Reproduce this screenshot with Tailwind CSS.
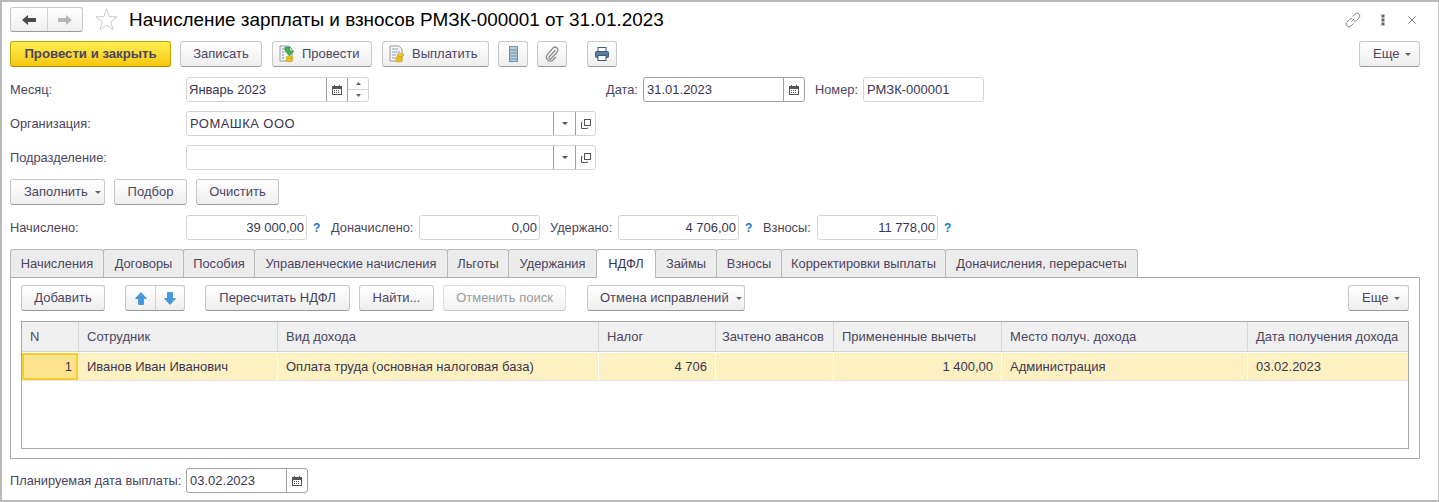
<!DOCTYPE html>
<html><head><meta charset="utf-8"><script src="https://cdn.jsdelivr.net/npm/@tailwindcss/browser@4"></script></head>
<body class="bg-white">
<div class="relative w-[1439px] h-[502px] overflow-hidden bg-white border-t-2 border-l-2 border-b-2 border-[#b9b9b9] font-['Liberation_Sans',Arial,sans-serif] text-[12.8px] text-[#4b4560]">
<div class="absolute right-0 top-0 bottom-0 w-[1px] bg-[#c8c8c8]"></div>
<div class="flex flex-col">
<!-- Title -->
<div class="flex items-center h-[25px] mt-[5px] ml-[8px]">
  <div class="flex w-[73px] h-[25px] rounded-[3px] border border-[#c8c8c8] border-b-[#9a9a9a] bg-gradient-to-b from-white to-[#eeeeee]">
    <div class="w-[37px] flex items-center justify-center border-r border-[#d0d0d0]"><svg width="14" height="10" viewBox="0 0 14 10"><path d="M0 5 L6 0 V3 H14 V7 H6 V10 Z" fill="#4a4a4a"/></svg></div>
    <div class="flex-1 flex items-center justify-center"><svg width="14" height="10" viewBox="0 0 14 10"><path d="M14 5 L8 0 V3 H0 V7 H8 V10 Z" fill="#b5b5b5"/></svg></div>
  </div>
  <svg class="ml-[12px]" width="23" height="23" viewBox="0 0 23 23"><path d="M11.5 1 L14.2 8.6 L22 8.9 L15.9 13.8 L18 21.6 L11.5 17.1 L5 21.6 L7.1 13.8 L1 8.9 L8.8 8.6 Z" fill="#fff" stroke="#c5ccd1"/></svg>
  <div class="ml-[11px] text-[18.9px] text-black leading-[24px] whitespace-nowrap">Начисление зарплаты и взносов РМЗК-000001 от 31.01.2023</div>
  <div class="ml-auto flex items-center mr-[23px]">
    <svg width="16" height="16" viewBox="0 0 16 16" fill="none" stroke="#8a8a8a" stroke-width="1"><path d="M6.5 9.5 L9.5 6.5"/><path d="M7.5 4.5 L10 2 a2.8 2.8 0 0 1 4 4 L11.5 8.5 a2.8 2.8 0 0 1-3 .5"/><path d="M8.5 11.5 L6 14 a2.8 2.8 0 0 1-4-4 L4.5 7.5 a2.8 2.8 0 0 1 3-.5"/></svg>
    <svg class="ml-[20px]" width="4" height="12" viewBox="0 0 4 12"><g fill="#666"><rect x="0.5" y="0.5" width="3" height="3"/><rect x="0.5" y="4.5" width="3" height="3"/><rect x="0.5" y="8.5" width="3" height="3"/></g></svg>
    <svg class="ml-[23px]" width="8" height="8" viewBox="0 0 8 8" stroke="#777" fill="none"><path d="M0.5 0.5 L7.5 7.5 M7.5 0.5 L0.5 7.5"/></svg>
  </div>
</div>
<!-- Toolbar -->
<div class="flex items-center h-[26px] mt-[9px] ml-[8px] text-[13px] whitespace-nowrap">
  <div class="h-[26px] w-[161px] flex items-center justify-center rounded-[3px] border border-[#c2a000] border-b-[#a68a00] bg-gradient-to-b from-[#fff04f] to-[#f7c600] font-bold text-[13.2px] text-[#4b4560]">Провести и закрыть</div>
  <div class="ml-[9px] h-[26px] w-[82px] flex items-center justify-center rounded-[3px] border border-[#c8c8c8] border-b-[#9a9a9a] bg-gradient-to-b from-white to-[#eeeeee]">Записать</div>
  <div class="ml-[10px] h-[26px] w-[100px] flex items-center gap-[6px] pl-[5px] rounded-[3px] border border-[#c8c8c8] border-b-[#9a9a9a] bg-gradient-to-b from-white to-[#eeeeee]">
    <svg width="18" height="18" viewBox="0 0 18 18"><path d="M2 1 H11 L14 4 V16 H2 Z" fill="#f4f4f4" stroke="#9a9a9a"/><path d="M4 4 H7 M4 7 H6 M4 10 H6 M4 13 H6" stroke="#6d8fb5"/><path d="M7 2 H12 V6 H16 L11.5 11 L7 6 Z" fill="#3fb24a" stroke="#2b8a35" stroke-width=".5"/><ellipse cx="11.5" cy="12.5" rx="3.5" ry="1.5" fill="#f3c623" stroke="#b38a0c" stroke-width=".5"/><ellipse cx="11.5" cy="15" rx="3.5" ry="1.5" fill="#f3c623" stroke="#b38a0c" stroke-width=".5"/></svg>
    <span>Провести</span></div>
  <div class="ml-[10px] h-[26px] w-[107px] flex items-center gap-[6px] pl-[5px] rounded-[3px] border border-[#c8c8c8] border-b-[#9a9a9a] bg-gradient-to-b from-white to-[#eeeeee]">
    <svg width="18" height="18" viewBox="0 0 18 18"><path d="M2 1 H11 L14 4 V16 H2 Z" fill="#f4f4f4" stroke="#9a9a9a"/><path d="M4 4 H10 M4 7 H12 M4 10 H8 M4 13 H7" stroke="#8fa6c2"/><ellipse cx="12.5" cy="10" rx="3.5" ry="1.5" fill="#f3c623" stroke="#b38a0c" stroke-width=".5"/><ellipse cx="11" cy="13" rx="3.5" ry="1.5" fill="#f3c623" stroke="#b38a0c" stroke-width=".5"/><ellipse cx="11" cy="15.5" rx="3.5" ry="1.5" fill="#f3c623" stroke="#b38a0c" stroke-width=".5"/></svg>
    <span>Выплатить</span></div>
  <div class="ml-[9px] h-[26px] w-[30px] flex items-center justify-center rounded-[3px] border border-[#c8c8c8] border-b-[#9a9a9a] bg-gradient-to-b from-white to-[#eeeeee]">
    <svg width="9" height="16" viewBox="0 0 9 16"><rect x=".5" y=".5" width="8" height="15" fill="#b4cde0" stroke="#6f8fab"/><path d="M1 4 H8 M1 7 H8 M1 10 H8 M1 13 H8" stroke="#6f8fab"/></svg></div>
  <div class="ml-[9px] h-[26px] w-[30px] flex items-center justify-center rounded-[3px] border border-[#c8c8c8] border-b-[#9a9a9a] bg-gradient-to-b from-white to-[#eeeeee]">
    <svg width="16" height="16" viewBox="0 0 16 16" fill="none" stroke="#8a8a8a" stroke-width="1.2"><path d="M11.5 4 L5 11 a1.5 1.5 0 0 0 2 2 L13 6 a2.8 2.8 0 0 0-4-4 L3 9 a4 4 0 0 0 5.500 5.500 L12 11"/></svg></div>
  <div class="ml-[20px] h-[26px] w-[30px] flex items-center justify-center rounded-[3px] border border-[#c8c8c8] border-b-[#9a9a9a] bg-gradient-to-b from-white to-[#eeeeee]">
    <svg width="16" height="16" viewBox="0 0 16 16"><rect x="4" y="1.5" width="8" height="4" fill="#fff" stroke="#3d5a78"/><rect x="1.5" y="5.5" width="13" height="6" rx="1" fill="#5b7c9e" stroke="#3d5a78"/><rect x="4" y="9.5" width="8" height="5" fill="#fff" stroke="#3d5a78"/></svg></div>
  <div class="ml-auto mr-[19px] h-[26px] w-[61px] flex items-center gap-[6px] pl-[13px] rounded-[3px] border border-[#c8c8c8] border-b-[#9a9a9a] bg-gradient-to-b from-white to-[#eeeeee]"><span>Еще</span><svg width="6" height="3" viewBox="0 0 6 3"><path d="M0 0 H6 L3 3 Z" fill="#666"/></svg></div>
</div>
<!-- Row month -->
<div class="flex items-center h-[25px] mt-[10px] ml-[8px] whitespace-nowrap">
  <div class="w-[176px]">Месяц:</div>
  <div class="flex w-[183px] h-[25px] rounded-[3px] border border-[#d4d4d4]">
    <div class="w-[139px] pl-[2px] leading-[23px] text-[13px] text-[#3a3550]">Январь 2023</div>
    <div class="w-[21px] flex items-center justify-center border-l border-[#a0a0a0]"><svg width="10" height="10" viewBox="0 0 10 10"><rect x=".5" y="1.5" width="9" height="8" fill="#fff" stroke="#555"/><path d="M1 2 H9 V4 H1 Z" fill="#555"/><path d="M2.5 0 V2 M7.500 0 V2" stroke="#555"/><path d="M2 5.5 H8 M2 7.5 H8" stroke="#555" stroke-dasharray="1 1"/></svg></div>
    <div class="flex-1 flex flex-col border-l border-[#a0a0a0]"><div class="flex-1 flex items-center justify-center border-b border-[#d4d4d4]"><svg width="5" height="3" viewBox="0 0 5 3"><path d="M0 3 H5 L2.5 0 Z" fill="#666"/></svg></div><div class="flex-1 flex items-center justify-center"><svg width="5" height="3" viewBox="0 0 5 3"><path d="M0 0 H5 L2.5 3 Z" fill="#666"/></svg></div></div>
  </div>
  <div class="ml-[237px] w-[37px]">Дата:</div>
  <div class="flex w-[162px] h-[25px] rounded-[3px] border border-[#a0a0a0]">
    <div class="flex-1 pl-[3px] leading-[23px] text-[13px] text-[#3a3550]">31.01.2023</div>
    <div class="w-[21px] flex items-center justify-center border-l border-[#a0a0a0]"><svg width="10" height="10" viewBox="0 0 10 10"><rect x=".5" y="1.5" width="9" height="8" fill="#fff" stroke="#555"/><path d="M1 2 H9 V4 H1 Z" fill="#555"/><path d="M2.5 0 V2 M7.5 0 V2" stroke="#555"/><path d="M2 5.5 H8 M2 7.5 H8" stroke="#555" stroke-dasharray="1 1"/></svg></div>
  </div>
  <div class="ml-[10px] w-[48px]">Номер:</div>
  <div class="w-[121px] h-[25px] rounded-[3px] border border-[#d4d4d4] pl-[3px] leading-[23px] text-[13px] text-[#3a3550]">РМЗК-000001</div>
</div>
<!-- Org -->
<div class="flex items-center h-[25px] mt-[9px] ml-[8px]">
  <div class="w-[176px]">Организация:</div>
  <div class="flex w-[410px] h-[25px] rounded-[3px] border border-[#d4d4d4]">
    <div class="flex-1 pl-[3px] leading-[23px] text-[13px] tracking-[0.45px] text-[#3a3550]">РОМАШКА ООО</div>
    <div class="w-[22px] flex items-center justify-center border-l border-[#a0a0a0]"><svg width="6" height="3" viewBox="0 0 6 3"><path d="M0 0 H6 L3 3 Z" fill="#555"/></svg></div>
    <div class="w-[20px] flex items-center justify-center border-l border-[#a0a0a0]"><svg width="10" height="10" viewBox="0 0 10 10" fill="none" stroke="#555"><rect x="3.5" y=".5" width="6" height="6"/><path d="M1.5 3.5 H.5 V9.5 H6.5 V8.5"/></svg></div>
  </div>
</div>
<div class="flex items-center h-[25px] mt-[9px] ml-[8px]">
  <div class="w-[176px]">Подразделение:</div>
  <div class="flex w-[410px] h-[25px] rounded-[3px] border border-[#d4d4d4]">
    <div class="flex-1"></div>
    <div class="w-[22px] flex items-center justify-center border-l border-[#a0a0a0]"><svg width="6" height="3" viewBox="0 0 6 3"><path d="M0 0 H6 L3 3 Z" fill="#555"/></svg></div>
    <div class="w-[20px] flex items-center justify-center border-l border-[#a0a0a0]"><svg width="10" height="10" viewBox="0 0 10 10" fill="none" stroke="#555"><rect x="3.5" y=".5" width="6" height="6"/><path d="M1.5 3.5 H.5 V9.5 H6.5 V8.5"/></svg></div>
  </div>
</div>
<!-- Fill buttons -->
<div class="flex items-center h-[26px] mt-[9px] ml-[8px] gap-[9px] text-[13px] whitespace-nowrap">
  <div class="h-[26px] w-[95px] flex items-center gap-[7px] pl-[13px] rounded-[3px] border border-[#c8c8c8] border-b-[#9a9a9a] bg-gradient-to-b from-white to-[#eeeeee]"><span>Заполнить</span><svg width="6" height="3" viewBox="0 0 6 3"><path d="M0 0 H6 L3 3 Z" fill="#666"/></svg></div>
  <div class="h-[26px] w-[73px] flex items-center justify-center rounded-[3px] border border-[#c8c8c8] border-b-[#9a9a9a] bg-gradient-to-b from-white to-[#eeeeee]">Подбор</div>
  <div class="h-[26px] w-[83px] flex items-center justify-center rounded-[3px] border border-[#c8c8c8] border-b-[#9a9a9a] bg-gradient-to-b from-white to-[#eeeeee]">Очистить</div>
</div>
<!-- Totals -->
<div class="flex items-center h-[25px] mt-[10px] ml-[8px] whitespace-nowrap">
  <div class="w-[176px]">Начислено:</div>
  <div class="w-[121px] h-[25px] rounded-[3px] border border-[#d4d4d4] pr-[2px] text-right leading-[23px] text-[13px] text-[#3a3550]">39 000,00</div>
  <div class="w-[24px] pl-[6px] text-[12px] font-bold text-[#0f7ac0]">?</div>
  <div class="w-[88px]">Доначислено:</div>
  <div class="w-[121px] h-[25px] rounded-[3px] border border-[#d4d4d4] pr-[2px] text-right leading-[23px] text-[13px] text-[#3a3550]">0,00</div>
  <div class="w-[10px]"></div>
  <div class="w-[68px]">Удержано:</div>
  <div class="w-[121px] h-[25px] rounded-[3px] border border-[#d4d4d4] pr-[2px] text-right leading-[23px] text-[13px] text-[#3a3550]">4 706,00</div>
  <div class="w-[24px] pl-[6px] text-[12px] font-bold text-[#0f7ac0]">?</div>
  <div class="w-[54px]">Взносы:</div>
  <div class="w-[121px] h-[25px] rounded-[3px] border border-[#d4d4d4] pr-[2px] text-right leading-[23px] text-[13px] text-[#3a3550]">11 778,00</div>
  <div class="w-[24px] pl-[6px] text-[12px] font-bold text-[#0f7ac0]">?</div>
</div>
<!-- Tabs -->
<div class="flex h-[29px] mt-[9px] ml-[8px] text-[12.85px] whitespace-nowrap relative z-10">
  <div class="w-[94px] h-[29px] bg-[#ececec] border border-[#b9b9b9] rounded-t-[3px] border-b-[#aaaaaa] flex items-center justify-center">Начисления</div>
  <div class="w-[81px] -ml-px h-[29px] bg-[#ececec] border border-[#b9b9b9] rounded-t-[3px] border-b-[#aaaaaa] flex items-center justify-center">Договоры</div>
  <div class="w-[72px] -ml-px h-[29px] bg-[#ececec] border border-[#b9b9b9] rounded-t-[3px] border-b-[#aaaaaa] flex items-center justify-center">Пособия</div>
  <div class="w-[194px] -ml-px h-[29px] bg-[#ececec] border border-[#b9b9b9] rounded-t-[3px] border-b-[#aaaaaa] flex items-center justify-center">Управленческие начисления</div>
  <div class="w-[62px] -ml-px h-[29px] bg-[#ececec] border border-[#b9b9b9] rounded-t-[3px] border-b-[#aaaaaa] flex items-center justify-center">Льготы</div>
  <div class="w-[89px] -ml-px h-[29px] bg-[#ececec] border border-[#b9b9b9] rounded-t-[3px] border-b-[#aaaaaa] flex items-center justify-center">Удержания</div>
  <div class="w-[60px] -ml-px h-[29px] bg-white border border-[#b9b9b9] border-b-0 rounded-t-[3px] flex items-center justify-center text-[#3a3550] relative z-10">НДФЛ</div>
  <div class="w-[62px] -ml-px h-[29px] bg-[#ececec] border border-[#b9b9b9] rounded-t-[3px] border-b-[#aaaaaa] flex items-center justify-center">Займы</div>
  <div class="w-[66px] -ml-px h-[29px] bg-[#ececec] border border-[#b9b9b9] rounded-t-[3px] border-b-[#aaaaaa] flex items-center justify-center">Взносы</div>
  <div class="w-[165px] -ml-px h-[29px] bg-[#ececec] border border-[#b9b9b9] rounded-t-[3px] border-b-[#aaaaaa] flex items-center justify-center">Корректировки выплаты</div>
  <div class="w-[193px] -ml-px h-[29px] bg-[#ececec] border border-[#b9b9b9] rounded-t-[3px] border-b-[#aaaaaa] flex items-center justify-center">Доначисления, перерасчеты</div>
</div>
<!-- Panel -->
<div class="ml-[8px] w-[1410px] h-[182px] -mt-px border border-[#aaaaaa] bg-white px-[10px] pt-[7px]">
  <div class="flex items-center h-[26px] text-[13px] whitespace-nowrap">
    <div class="h-[26px] w-[84px] flex items-center justify-center rounded-[3px] border border-[#c8c8c8] border-b-[#9a9a9a] bg-gradient-to-b from-white to-[#eeeeee]">Добавить</div>
    <div class="ml-[20px] h-[26px] w-[60px] flex rounded-[3px] border border-[#c8c8c8] border-b-[#9a9a9a] bg-gradient-to-b from-white to-[#eeeeee]">
      <div class="w-[30px] flex items-center justify-center border-r border-[#d0d0d0]"><svg width="12" height="13" viewBox="0 0 12 13"><path d="M6 .5 L11.5 6.5 H8.5 V12.5 H3.5 V6.5 H.5 Z" fill="#3f9ae0" stroke="#2c78b8" stroke-width=".6"/></svg></div>
      <div class="flex-1 flex items-center justify-center"><svg width="12" height="13" viewBox="0 0 12 13"><path d="M6 12.5 L11.5 6.5 H8.5 V.5 H3.5 V6.5 H.5 Z" fill="#3f9ae0" stroke="#2c78b8" stroke-width=".6"/></svg></div>
    </div>
    <div class="ml-[20px] h-[26px] w-[145px] flex items-center justify-center rounded-[3px] border border-[#c8c8c8] border-b-[#9a9a9a] bg-gradient-to-b from-white to-[#eeeeee]">Пересчитать НДФЛ</div>
    <div class="ml-[9px] h-[26px] w-[75px] flex items-center justify-center rounded-[3px] border border-[#c8c8c8] border-b-[#9a9a9a] bg-gradient-to-b from-white to-[#eeeeee]">Найти...</div>
    <div class="ml-[9px] h-[26px] w-[123px] flex items-center justify-center rounded-[3px] border border-[#dddddd] border-b-[#c8c8c8] bg-gradient-to-b from-white to-[#f2f2f2] text-[#9c9c9c]">Отменить поиск</div>
    <div class="ml-[21px] h-[26px] w-[158px] flex items-center gap-[7px] pl-[12px] rounded-[3px] border border-[#c8c8c8] border-b-[#9a9a9a] bg-gradient-to-b from-white to-[#eeeeee]"><span>Отмена исправлений</span><svg width="6" height="3" viewBox="0 0 6 3"><path d="M0 0 H6 L3 3 Z" fill="#666"/></svg></div>
    <div class="ml-auto h-[26px] w-[61px] flex items-center gap-[6px] pl-[13px] rounded-[3px] border border-[#c8c8c8] border-b-[#9a9a9a] bg-gradient-to-b from-white to-[#eeeeee]"><span>Еще</span><svg width="6" height="3" viewBox="0 0 6 3"><path d="M0 0 H6 L3 3 Z" fill="#666"/></svg></div>
  </div>
  <div class="mt-[10px] h-[128px] border border-[#a8a8a8] text-[13px] whitespace-nowrap">
    <div class="flex h-[30px] bg-[#f0f0f0] border-b border-[#d4d4d4]">
      <div class="w-[57px] pl-[8px] leading-[29px] border-r border-[#d8d8d8]">N</div>
      <div class="w-[199px] pl-[8px] leading-[29px] border-r border-[#d8d8d8]">Сотрудник</div>
      <div class="w-[321px] pl-[8px] leading-[29px] border-r border-[#d8d8d8]">Вид дохода</div>
      <div class="w-[117px] pl-[8px] leading-[29px] border-r border-[#d8d8d8]">Налог</div>
      <div class="w-[118px] pl-[6px] leading-[29px] border-r border-[#d8d8d8]">Зачтено авансов</div>
      <div class="w-[168px] pl-[8px] leading-[29px] border-r border-[#d8d8d8]">Примененные вычеты</div>
      <div class="w-[246px] pl-[8px] leading-[29px] border-r border-[#d8d8d8]">Место получ. дохода</div>
      <div class="flex-1 pl-[8px] leading-[29px]">Дата получения дохода</div>
    </div>
    <div class="flex h-[28px] mt-[1px] bg-[#fdf1c2] border-b border-[#e6e6e6] text-[#3a3550]">
      <div class="w-[56px] h-[27px] mr-[1px] pr-[4px] text-right leading-[23px] bg-[#fee48f] border-2 border-[#fbcb2c]">1</div>
      <div class="w-[199px] pl-[8px] leading-[27px] border-r border-white">Иванов Иван Иванович</div>
      <div class="w-[321px] pl-[8px] leading-[27px] border-r border-white">Оплата труда (основная налоговая база)</div>
      <div class="w-[117px] pr-[8px] text-right leading-[27px] border-r border-white">4 706</div>
      <div class="w-[118px] border-r border-white"></div>
      <div class="w-[168px] pr-[8px] text-right leading-[27px] border-r border-white">1 400,00</div>
      <div class="w-[246px] pl-[8px] leading-[27px] border-r border-white">Администрация</div>
      <div class="flex-1 pl-[8px] leading-[27px]">03.02.2023</div>
    </div>
  </div>
</div>
<!-- Bottom -->
<div class="flex items-center h-[25px] mt-[9px] ml-[8px] whitespace-nowrap">
  <div class="w-[176px]">Планируемая дата выплаты:</div>
  <div class="flex w-[122px] h-[25px] rounded-[3px] border border-[#a0a0a0]">
    <div class="flex-1 pl-[3px] leading-[23px] text-[13px] text-[#3a3550]">03.02.2023</div>
    <div class="w-[21px] flex items-center justify-center border-l border-[#a0a0a0]"><svg width="10" height="10" viewBox="0 0 10 10"><rect x=".5" y="1.5" width="9" height="8" fill="#fff" stroke="#555"/><path d="M1 2 H9 V4 H1 Z" fill="#555"/><path d="M2.5 0 V2 M7.5 0 V2" stroke="#555"/><path d="M2 5.5 H8 M2 7.5 H8" stroke="#555" stroke-dasharray="1 1"/></svg></div>
  </div>
</div>
</div>
</div>
</body></html>
